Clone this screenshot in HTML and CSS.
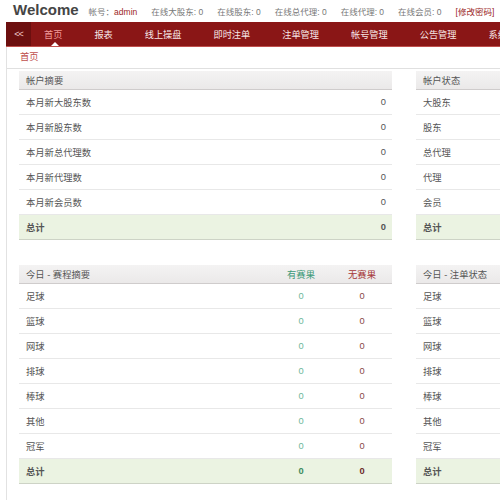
FILE: index.html
```html
<!DOCTYPE html>
<html>
  <head>
    <title>Welcome</title>
    <link rel="stylesheet" href="styles.css">
  </head>
  <body>
    <div class="top">
      <span class="logo">Welcome</span>
      <span class="info">帐号：<span class="user">admin</span></span>
      <span class="info">在线大股东: 0</span>
      <span class="info">在线股东: 0</span>
      <span class="info">在线总代理: 0</span>
      <span class="info">在线代理: 0</span>
      <span class="info">在线会员: 0</span>
      <span class="info"><a class="pwd" href="#">[修改密码]</a></span>
    </div>

    <div class="main">
      <div class="nav">
        <span class="toggle">&lt;&lt;</span>
        <a class="active" href="#">首页</a>
        <a href="#">报表</a>
        <a href="#">线上操盘</a>
        <a href="#">即时注单</a>
        <a href="#">注单管理</a>
        <a href="#">帐号管理</a>
        <a href="#">公告管理</a>
        <a href="#">系统设置</a>
      </div>
      <div class="crumb"><a href="#">首页</a></div>

      <div class="grid">
        <table class="box">
          <tr class="head"><th>帐户摘要</th><th></th></tr>
          <tr><td>本月新大股东数</td><td class="num">0</td></tr>
          <tr><td>本月新股东数</td><td class="num">0</td></tr>
          <tr><td>本月新总代理数</td><td class="num">0</td></tr>
          <tr><td>本月新代理数</td><td class="num">0</td></tr>
          <tr><td>本月新会员数</td><td class="num">0</td></tr>
          <tr class="total"><td>总计</td><td class="num">0</td></tr>
        </table>

        <table class="box">
          <tr class="head"><th>帐户状态</th><th class="c">启用</th><th class="c">停用</th></tr>
          <tr><td>大股东</td><td class="c">0</td><td class="c">0</td></tr>
          <tr><td>股东</td><td class="c">0</td><td class="c">0</td></tr>
          <tr><td>总代理</td><td class="c">0</td><td class="c">0</td></tr>
          <tr><td>代理</td><td class="c">0</td><td class="c">0</td></tr>
          <tr><td>会员</td><td class="c">0</td><td class="c">0</td></tr>
          <tr class="total"><td>总计</td><td class="c">0</td><td class="c">0</td></tr>
        </table>

        <table class="box">
          <tr class="head"><th>今日 - 赛程摘要</th><th class="c ok">有赛果</th><th class="c no">无赛果</th></tr>
          <tr><td>足球</td><td class="c ok">0</td><td class="c no">0</td></tr>
          <tr><td>篮球</td><td class="c ok">0</td><td class="c no">0</td></tr>
          <tr><td>网球</td><td class="c ok">0</td><td class="c no">0</td></tr>
          <tr><td>排球</td><td class="c ok">0</td><td class="c no">0</td></tr>
          <tr><td>棒球</td><td class="c ok">0</td><td class="c no">0</td></tr>
          <tr><td>其他</td><td class="c ok">0</td><td class="c no">0</td></tr>
          <tr><td>冠军</td><td class="c ok">0</td><td class="c no">0</td></tr>
          <tr class="total"><td>总计</td><td class="c ok">0</td><td class="c no">0</td></tr>
        </table>

        <table class="box">
          <tr class="head"><th>今日 - 注单状态</th><th class="c">注单</th><th class="c">金额</th></tr>
          <tr><td>足球</td><td class="c">0</td><td class="c">0</td></tr>
          <tr><td>篮球</td><td class="c">0</td><td class="c">0</td></tr>
          <tr><td>网球</td><td class="c">0</td><td class="c">0</td></tr>
          <tr><td>排球</td><td class="c">0</td><td class="c">0</td></tr>
          <tr><td>棒球</td><td class="c">0</td><td class="c">0</td></tr>
          <tr><td>其他</td><td class="c">0</td><td class="c">0</td></tr>
          <tr><td>冠军</td><td class="c">0</td><td class="c">0</td></tr>
          <tr class="total"><td>总计</td><td class="c">0</td><td class="c">0</td></tr>
        </table>
      </div>
    </div>
  </body>
</html>
```

FILE: styles.css
```css
body {
  margin: 0;
  min-width: 840px;
  overflow: hidden;
  font-family: "Liberation Sans", "Noto Sans CJK SC", sans-serif;
  font-size: 9px;
  color: #555;
  background-color: #fff;
}

a {
  text-decoration: none;
}

.top {
  display: flex;
  align-items: baseline;
  gap: 14px;
  height: 22px;
  padding-left: 13px;
  box-sizing: border-box;
  padding-top: 1px;
}

.logo {
  font-size: 15px;
  font-weight: bold;
  color: #454545;
  margin-right: -4px;
}

.info {
  font-size: 8.5px;
  color: #777;
}

.user,
.pwd {
  color: #9b2626;
}

.main {
  margin-left: 6px;
  border-left: 1px solid #e2e2e2;
  min-height: 480px;
}

.nav {
  display: flex;
  align-items: stretch;
  height: 24px;
  margin-left: -1px;
  background-color: #8a1616;
  border-bottom: 1px solid #c0504d;
}

.toggle {
  width: 25px;
  display: flex;
  align-items: center;
  justify-content: center;
  background-color: #6c0f0f;
  color: #f0c8c8;
  font-size: 9px;
  letter-spacing: -1px;
}

.nav a {
  position: relative;
  display: flex;
  align-items: center;
  padding: 0 16px;
  color: #f6e6e6;
  font-size: 9.2px;
}

.nav a.active {
  padding-left: 13px;
  padding-right: 16px;
  color: #f29a9a;
}

.nav a.active::after {
  content: "";
  position: absolute;
  bottom: 0;
  left: 50%;
  margin-left: -4px;
  border: 4px solid transparent;
  border-bottom-color: #fff;
  border-top-width: 0;
}

.crumb {
  height: 21px;
  line-height: 21px;
  padding-left: 13px;
  border-bottom: 1px solid #e0e0e0;
}

.crumb a {
  color: #c0504d;
  font-size: 9.3px;
}

.grid {
  display: grid;
  grid-template-columns: 373px 373px;
  column-gap: 24px;
  row-gap: 25px;
  padding: 2px 0 0 12px;
}

.box {
  width: 100%;
  border-collapse: collapse;
  font-size: 9.3px;
}

.box th,
.box td {
  height: 24px;
  padding: 0 6px 0 7px;
  text-align: left;
  border-bottom: 1px solid #e8e8e8;
}

.box .head th {
  height: 18px;
  font-weight: normal;
  color: #555;
  background: linear-gradient(#f4f3f3, #ebe9e9);
  border-bottom: 1px solid #cfcccc;
}

.box .num {
  text-align: right;
}

.box .c {
  width: 48px;
  text-align: center;
}

.box th.ok {
  color: #3c9a78;
}

.box th.no {
  color: #a53636;
}

.box td.ok {
  color: #6db79b;
}

.box td.no {
  color: #8a4848;
}

.box .total td {
  background-color: #ebf3e2;
  font-weight: bold;
  border-bottom: 1px solid #cdd3c6;
}

.box .total td.ok {
  color: #3d8a5e;
}

.box .total td.no {
  color: #6e2c2c;
}
```
